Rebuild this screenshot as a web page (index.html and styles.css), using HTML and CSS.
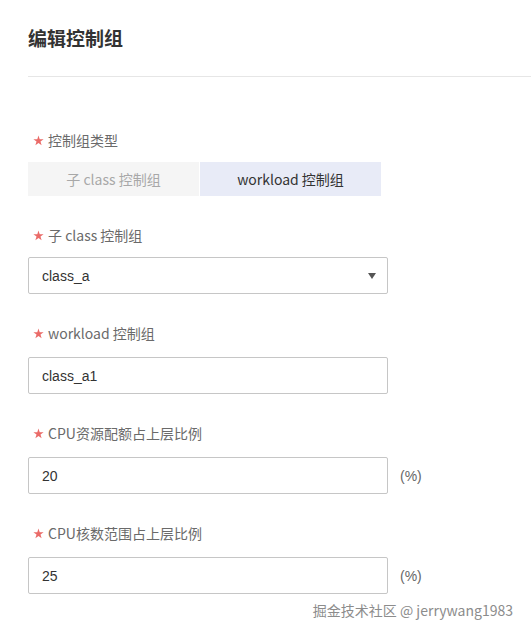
FILE: index.html
```html
<!DOCTYPE html>
<html lang="zh-CN">
<head>
<meta charset="utf-8">
<title>编辑控制组</title>
<link rel="stylesheet" href="styles.css">
</head>
<body>
<div class="page">
  <header class="head">
    <h1 class="title">编辑控制组</h1>
  </header>
  <form class="form">
    <div class="field">
      <label class="label"><svg class="req" width="11" height="11" viewBox="0 0 20 20"><path d="M10 1 L12.2 7.6 L19.3 7.6 L13.6 11.8 L15.7 18.6 L10 14.4 L4.3 18.6 L6.4 11.8 L0.7 7.6 L7.8 7.6 Z"/></svg>控制组类型</label>
      <div class="seg">
        <button type="button" class="seg-btn">子 class 控制组</button>
        <button type="button" class="seg-btn active">workload 控制组</button>
      </div>
    </div>
    <div class="field">
      <label class="label"><svg class="req" width="11" height="11" viewBox="0 0 20 20"><path d="M10 1 L12.2 7.6 L19.3 7.6 L13.6 11.8 L15.7 18.6 L10 14.4 L4.3 18.6 L6.4 11.8 L0.7 7.6 L7.8 7.6 Z"/></svg>子 class 控制组</label>
      <div class="select">
        <span class="select-val">class_a</span>
        <svg class="caret" width="8" height="6" viewBox="0 0 8 6"><path d="M0 0 H8 L4 6 Z" fill="#555"/></svg>
      </div>
    </div>
    <div class="field field-text">
      <label class="label"><svg class="req" width="11" height="11" viewBox="0 0 20 20"><path d="M10 1 L12.2 7.6 L19.3 7.6 L13.6 11.8 L15.7 18.6 L10 14.4 L4.3 18.6 L6.4 11.8 L0.7 7.6 L7.8 7.6 Z"/></svg>workload 控制组</label>
      <div class="row">
        <div class="input">class_a1</div>
      </div>
    </div>
    <div class="field field-text">
      <label class="label"><svg class="req" width="11" height="11" viewBox="0 0 20 20"><path d="M10 1 L12.2 7.6 L19.3 7.6 L13.6 11.8 L15.7 18.6 L10 14.4 L4.3 18.6 L6.4 11.8 L0.7 7.6 L7.8 7.6 Z"/></svg>CPU资源配额占上层比例</label>
      <div class="row">
        <div class="input">20</div>
        <span class="unit">(%)</span>
      </div>
    </div>
    <div class="field field-text">
      <label class="label"><svg class="req" width="11" height="11" viewBox="0 0 20 20"><path d="M10 1 L12.2 7.6 L19.3 7.6 L13.6 11.8 L15.7 18.6 L10 14.4 L4.3 18.6 L6.4 11.8 L0.7 7.6 L7.8 7.6 Z"/></svg>CPU核数范围占上层比例</label>
      <div class="row">
        <div class="input">25</div>
        <span class="unit">(%)</span>
      </div>
    </div>
  </form>
  <div class="watermark">掘金技术社区 @ jerrywang1983</div>
</div>
</body>
</html>
```

FILE: styles.css
```css
html, body {
  margin: 0;
  padding: 0;
  background: #fff;
}
body {
  font-family: "Noto Sans", "Noto Sans CJK SC", sans-serif;
  color: #333;
}
.page {
  position: relative;
  width: 531px;
  height: 637px;
  overflow: hidden;
}
.head {
  margin-left: 28px;
  padding-top: 25px;
  padding-bottom: 25px;
  border-bottom: 1px solid #e6e6e6;
}
.title {
  margin: 0;
  font-family: "Noto Sans CJK SC", sans-serif;
  font-size: 19px;
  line-height: 26px;
  font-weight: 700;
  color: #333;
}
.form {
  padding-left: 28px;
  padding-top: 53px;
  display: flex;
  flex-direction: column;
  gap: 29px;
}
.field {
  display: flex;
  flex-direction: column;
  gap: 12px;
}
.field-text {
  gap: 14px;
}
.label {
  display: flex;
  align-items: center;
  height: 20px;
  font-family: "Noto Sans CJK SC", sans-serif;
  font-size: 14px;
  color: #6a6a6a;
}
.req {
  margin-left: 5px;
  margin-right: 4px;
  flex: none;
  fill: #ea6b68;
}
.seg {
  display: flex;
  gap: 1px;
}
.seg-btn {
  width: 171px;
  height: 34px;
  border: 0;
  margin: 0;
  padding: 0;
  background: #f5f5f5;
  color: #a8a8a8;
  font-family: "Noto Sans CJK SC", sans-serif;
  font-size: 14px;
}
.seg-btn.active {
  width: 181px;
  background: #e8ebf7;
  color: #333;
}
.select, .input {
  width: 360px;
  height: 37px;
  box-sizing: border-box;
  border: 1px solid #c6c6c6;
  border-radius: 2px;
  display: flex;
  align-items: center;
  padding: 0 13px;
  font-family: "Liberation Sans", sans-serif;
  font-size: 14px;
  color: #333;
}
.select {
  justify-content: space-between;
  padding-right: 11px;
}
.row {
  display: flex;
  align-items: center;
  gap: 12px;
}
.unit {
  font-family: "Liberation Sans", sans-serif;
  font-size: 14px;
  color: #666;
}
.watermark {
  position: absolute;
  right: 18px;
  top: 599px;
  font-family: "Noto Sans CJK SC", sans-serif;
  font-size: 14px;
  line-height: 22px;
  color: #8c8c8c;
  text-shadow: 0 0 2px #fff;
}
```
